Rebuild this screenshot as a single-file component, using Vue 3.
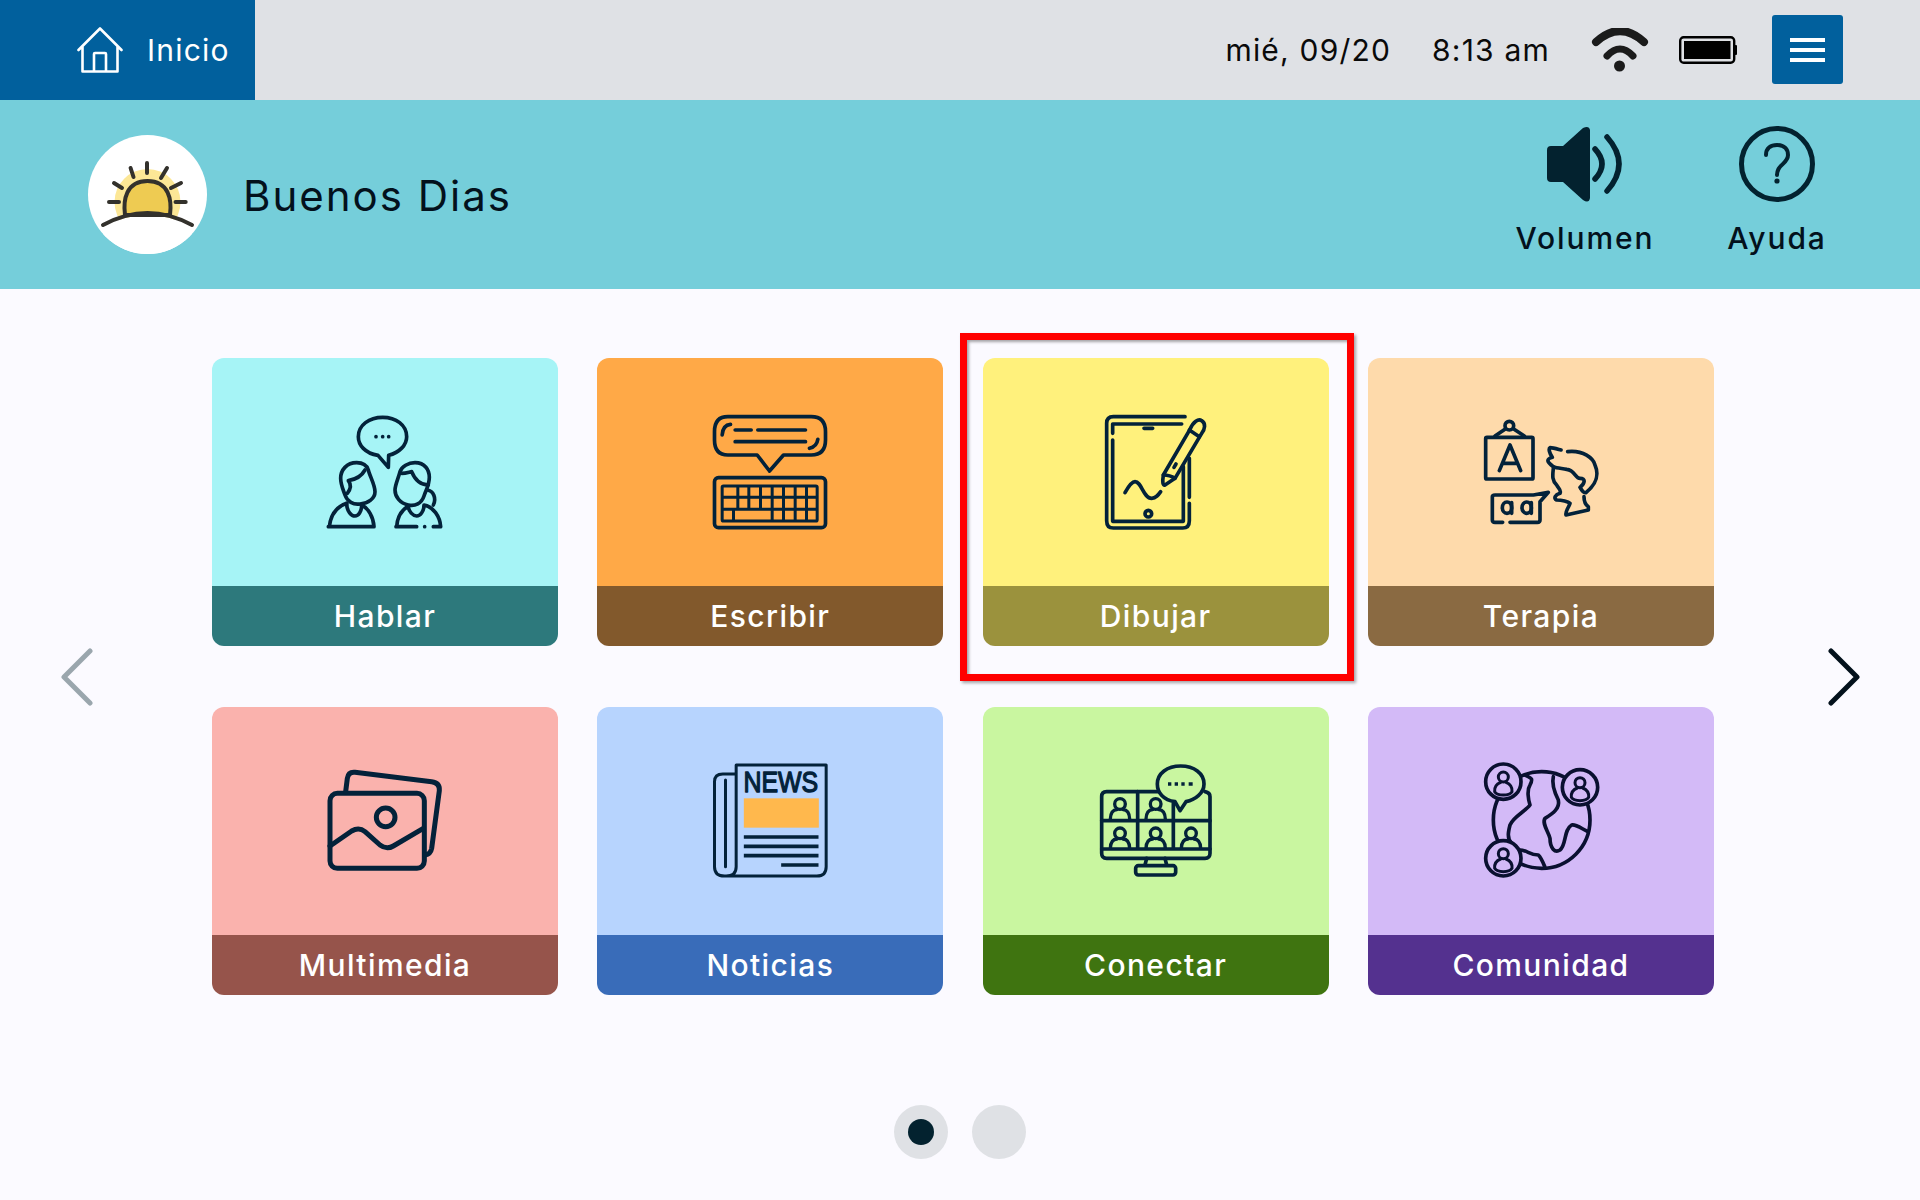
<script setup>
const cards = [
  { key: 'hablar', label: 'Hablar', top: '#a6f4f6', bar: '#2d797c', box: '75 66 360 360' },
  { key: 'escribir', label: 'Escribir', top: '#ffa947', bar: '#82592c', box: '61.5 66 360 360' },
  { key: 'dibujar', label: 'Dibujar', top: '#fff17c', bar: '#9b923d', box: '78 66 360 360', marked: true },
  { key: 'terapia', label: 'Terapia', top: '#fedaab', bar: '#8a6a42', box: '63 36 360 360' },
  { key: 'multimedia', label: 'Multimedia', top: '#fab2ad', bar: '#96544b', box: '45 33 360 360' },
  { key: 'noticias', label: 'Noticias', top: '#b7d4fe', bar: '#396cb9', box: '61.5 33 360 360' },
  { key: 'conectar', label: 'Conectar', top: '#c9f6a0', bar: '#3f7410', box: '48 33 360 360' },
  { key: 'comunidad', label: 'Comunidad', top: '#d3baf7', bar: '#54318f', box: '33 33 360 360' }
]
const keyV = [145, 178, 213, 248, 282, 317, 351]
const viewers = [[120, 162], [227, 162], [120, 250], [227, 250], [333, 250]]
const globePeople = [[100, 95], [330, 112], [100, 325]]
</script>

<template>
  <div class="page">
    <header class="topbar">
      <div class="home">
        <svg class="home-icon" viewBox="0 0 46 46" fill="none" stroke="#fff" stroke-width="2.6" stroke-linejoin="round" stroke-linecap="round">
          <path d="M1.5 23 L23 1.5 L44.5 23 M5.5 20 V44.5 H40.5 V20 M17 44.5 V27 Q17 26 18 26 H28 Q29 26 29 27 V44.5" />
        </svg>
        <span class="home-label">Inicio</span>
      </div>
      <div class="status">
        <span class="date">mié, 09/20</span>
        <span class="time">8:13 am</span>
        <svg class="wifi" viewBox="0 0 58 44" fill="none" stroke="#1b1b1b" stroke-linecap="round">
          <path d="M5 14 Q29 -8 53 14" stroke-width="8" />
          <path d="M16 28 Q29 14 42 28" stroke-width="7" />
          <circle cx="28.5" cy="38" r="5.5" fill="#1b1b1b" stroke="none" />
        </svg>
        <svg class="battery" viewBox="0 0 58 28">
          <rect x="1.2" y="1.2" width="54" height="25.6" rx="3.5" fill="none" stroke="#000" stroke-width="2.4" />
          <rect x="5" y="5" width="46.5" height="18" fill="#000" />
          <rect x="55.5" y="9" width="2.5" height="10" rx="1" fill="#000" />
        </svg>
        <button class="menu" type="button" aria-label="Menú">
          <i></i><i></i><i></i>
        </button>
      </div>
    </header>

    <section class="greeting">
      <div class="avatar">
        <svg viewBox="0 0 119 119" width="119" height="119" fill="none" stroke="#33312c" stroke-width="4" stroke-linecap="round">
          <circle cx="59.5" cy="67" r="33" fill="#fce796" stroke="none" />
          <path d="M15 92 Q59.5 68 104 92 L104 119 H15 Z" fill="#fff" stroke="none" />
          <path d="M37 80 C35 65 38 46 59.5 46 C81 46 84 65 82 80 Z" fill="#eecb52" />
          <path d="M59 28 V38 M42.6 33 L45.5 42 M79 33 L73 43 M26 48 L34 53 M93 48 L83 53 M21 67 H31 M87.5 67 H97.7" />
          <path d="M15 90 Q59.5 66 104 90" />
        </svg>
      </div>
      <h1 class="hello">Buenos Dias</h1>
      <div class="tools">
        <div class="tool volume">
          <svg width="77" height="76" viewBox="0 0 77 76" fill="none" stroke="#03222f" stroke-width="5.5" stroke-linecap="round">
            <path d="M0 24 Q0 20 4 20 H16 L36 2 Q42 -1 43 4 V72 Q42 78 36 74 L16 56 H4 Q0 56 0 52 Z" fill="#03222f" stroke="none" />
            <path d="M48 23 Q62 38 48 53 M60 11 Q84 38 60 65" />
          </svg>
          <span>Volumen</span>
        </div>
        <div class="tool help">
          <svg width="76" height="76" viewBox="0 0 76 76" fill="none" stroke="#03222f" stroke-linecap="round">
            <circle cx="38" cy="38" r="35.5" stroke-width="5" />
            <path d="M27 29 C27 22 32 19 38 19 C45 19 49 23 49 29 C49 36 42 38 39.5 43 C38.5 45 38 47 38 49" stroke-width="4" />
            <circle cx="38" cy="55" r="2.6" fill="#03222f" stroke="none" />
          </svg>
          <span>Ayuda</span>
        </div>
      </div>
    </section>

    <main class="carousel">
      <div class="side side-left">
        <svg width="32" height="58" viewBox="0 0 32 58" fill="none" stroke="#9aa6ad" stroke-width="5" stroke-linecap="round" stroke-linejoin="round">
          <path d="M29 3 L3 29 L29 55" />
        </svg>
      </div>
      <div class="grid">
        <article v-for="c in cards" :key="c.key" class="card">
          <div class="art" :style="{ background: c.top }">
            <svg class="glyph" :viewBox="c.box" fill="none" stroke="#03223a" stroke-width="11" stroke-linecap="round" stroke-linejoin="round">
              <template v-if="c.key === 'hablar'">
                <path d="M234 196 C195 190 175 165 175 140 C175 105 208 82 248 82 C288 82 320 105 320 140 C320 165 298 188 266 196 L265 232 Z" />
                <g fill="#03223a" stroke="none"><circle cx="228" cy="140" r="5.5" /><circle cx="248" cy="140" r="5.5" /><circle cx="266" cy="140" r="5.5" /></g>
                <path d="M170 218 C140 218 122 240 122 265 C122 285 130 300 135 315 C142 335 160 345 180 342 C205 340 225 325 225 305 C225 285 210 260 205 240 C200 225 185 218 170 218 Z" />
                <path d="M195 240 C185 258 170 268 145 272 C155 285 150 300 142 310" />
                <path d="M140 340 C140 365 155 378 165 378 C175 378 185 365 185 345" />
                <path d="M88 410 C92 375 110 350 140 340 M185 345 C205 355 220 380 222 410 M85 410 H222" />
                <path d="M345 218 C375 218 388 240 388 262 C388 285 378 300 372 318 C365 340 345 350 325 345 C300 340 285 320 285 300 C285 285 295 265 300 245 C305 230 325 218 345 218 Z" />
                <path d="M305 250 C320 250 330 245 335 245 C345 270 360 285 385 285" />
                <path d="M382 300 C400 302 410 325 400 345" />
                <path d="M290 410 C292 380 305 360 325 348 C325 365 340 378 350 378 C360 378 372 365 372 345 C400 350 420 380 422 410 M288 410 H350 M400 410 H422" />
                <circle cx="374" cy="410" r="5.5" fill="#03223a" stroke="none" />
              </template>
              <template v-else-if="c.key === 'escribir'">
                <path d="M115 80 H365 Q408 80 408 125 V150 Q408 195 365 195 H282 L240 243 L203 195 H115 Q75 195 75 150 V125 Q75 80 115 80 Z" />
                <path d="M123 103 Q100 105 98 135 M137 120 H185 M205 120 H348 M137 155 H348 M385 148 Q382 170 360 175" />
                <rect x="75" y="263" width="333" height="150" rx="12" />
                <rect x="98" y="288" width="285" height="105" rx="4" stroke-width="9" />
                <path stroke-width="9" stroke-linecap="butt" d="M98 322 H383 M98 358 H383" />
                <path v-for="x in keyV.slice(0, 3)" :key="x" stroke-width="9" stroke-linecap="butt" :d="`M${x} 288 V358`" />
                <path v-for="x in keyV.slice(3)" :key="x" stroke-width="9" stroke-linecap="butt" :d="`M${x} 288 V393`" />
                <path stroke-width="9" stroke-linecap="butt" d="M132 358 V393" />
              </template>
              <template v-else-if="c.key === 'dibujar'">
                <path d="M345 80 H130 Q110 80 110 100 V392 Q110 414 130 414 H338 Q358 414 358 392 V340 M358 322 V205" />
                <path d="M128 150 V394 H340 V230 M128 130 V102 H335" />
                <path d="M222 115 H248 M165 308 C175 290 185 275 195 275 C215 275 220 325 245 325 C258 325 265 315 272 305 M312 232 L318 222" />
                <circle cx="235" cy="371" r="10" />
                <path d="M280 255 L360 118 C370 95 385 85 395 92 C408 100 405 118 395 130 L315 265 L285 285 Q275 288 280 255 Z" />
                <path d="M280 255 Q300 255 315 265 M358 120 L388 140" />
              </template>
              <template v-else-if="c.key === 'terapia'">
                <rect x="77" y="112" width="142" height="125" rx="4" />
                <circle cx="148" cy="77" r="13" />
                <path d="M105 108 L137 86 M160 86 L193 108 M118 212 L150 135 L182 212 M128 190 H172" />
                <path d="M128 367 H105 Q97 367 97 360 V290 Q97 285 105 285 H220 L265 277 L240 305 V360 Q240 367 232 367 H150" />
                <ellipse cx="141" cy="323" rx="14" ry="17" />
                <ellipse cx="200" cy="323" rx="14" ry="17" />
                <path d="M155 308 V340 M214 308 V340" />
                <path d="M323 155 C370 150 400 175 405 195 C420 230 405 255 378 278 C370 280 365 270 360 262 C375 250 378 235 360 235 C345 235 345 210 320 208 C305 205 290 205 280 200 C260 185 258 178 277 172 C268 160 265 145 270 143 C280 143 295 148 303 150" />
                <path d="M280 205 C278 225 275 240 290 255 C295 265 305 270 300 280 C285 285 280 295 290 300 C305 300 325 305 330 310 C325 325 315 335 318 345 L385 330 L385 320 C378 315 372 305 372 290" />
              </template>
              <template v-else-if="c.key === 'multimedia'">
                <rect x="60" y="130" width="283" height="225" rx="22" stroke-width="15" />
                <path stroke-width="15" d="M107 125 L112 85 Q115 65 135 67 L365 95 Q390 98 388 122 L365 295 Q362 312 345 315" />
                <circle cx="227" cy="202" r="28" stroke-width="15" />
                <path stroke-width="15" d="M60 288 L125 243 Q147 230 165 245 L210 285 Q230 300 250 288 L340 235" />
              </template>
              <template v-else-if="c.key === 'noticias'">
                <rect x="163" y="145" width="225" height="88" fill="#ffb84d" stroke="none" />
                <path stroke-width="9" d="M140 45 H410 V350 Q410 378 382 378 H105 Q75 378 75 350 V95 Q75 72 100 72 H140 M140 45 V350 Q140 378 110 378 M108 90 V350" />
                <path stroke-width="11" stroke-linecap="butt" d="M163 261 H387 M163 289 H387 M163 317 H387 M275 345 H387" />
                <text class="news" transform="translate(162 126) scale(0.83 1)">NEWS</text>
              </template>
              <template v-else-if="c.key === 'conectar'">
                <path d="M235 125 H80 Q65 125 65 140 V310 Q65 325 80 325 H375 Q390 325 390 310 V140 Q390 128 375 125" />
                <path d="M65 297 H390 M65 212 H390 M173 125 V297 M280 160 V297" />
                <g v-for="(p, i) in viewers" :key="i">
                  <circle :cx="p[0]" :cy="p[1]" r="16" stroke-width="10" />
                  <path stroke-width="10" :d="`M${p[0] - 29} ${p[1] + 45} Q${p[0] - 28} ${p[1] + 18} ${p[0] - 9} ${p[1] + 17} M${p[0] + 9} ${p[1] + 17} Q${p[0] + 28} ${p[1] + 18} ${p[0] + 29} ${p[1] + 45}`" />
                </g>
                <path :fill="c.top" d="M285 155 C250 150 232 128 232 102 C232 70 262 48 302 48 C342 48 372 70 372 102 C372 130 345 150 318 155 L300 182 Z" />
                <path stroke-linecap="butt" d="M264 102 H274 M284 102 H294 M304 102 H314 M326 102 H338" />
                <path d="M200 325 L195 345 M255 325 L260 345" />
                <rect x="167" y="347" width="120" height="28" rx="8" />
              </template>
              <template v-else>
                <g stroke="#0a1030">
                  <circle cx="215" cy="210" r="145" />
                  <path d="M165 75 C185 85 190 85 180 105 C170 120 175 150 180 165 C165 185 130 200 120 225 C115 245 110 265 125 280" />
                  <path d="M150 300 C170 300 180 315 205 315 C215 325 220 340 225 352" />
                  <path d="M250 80 C245 100 255 130 265 150 C270 175 250 190 225 205 C215 220 235 245 240 265 C240 295 255 310 270 300 C290 285 280 240 305 225 C320 222 340 240 355 245" />
                  <g v-for="(p, i) in globePeople" :key="i">
                    <circle :cx="p[0]" :cy="p[1]" r="53" :fill="c.top" />
                    <circle :cx="p[0]" :cy="p[1] - 14" r="15" stroke-width="9" />
                    <path stroke-width="9" :d="`M${p[0] - 8} ${p[1] + 2} Q${p[0] - 28} ${p[1] + 10} ${p[0] - 26} ${p[1] + 30} Q${p[0] - 20} ${p[1] + 40} ${p[0]} ${p[1] + 40} Q${p[0] + 20} ${p[1] + 40} ${p[0] + 26} ${p[1] + 30} Q${p[0] + 28} ${p[1] + 10} ${p[0] + 8} ${p[1] + 2}`" />
                  </g>
                </g>
              </template>
            </svg>
          </div>
          <div class="bar" :style="{ background: c.bar }">{{ c.label }}</div>
          <span v-if="c.marked" class="marker"></span>
        </article>
      </div>
      <div class="side side-right">
        <svg width="32" height="58" viewBox="0 0 32 58" fill="none" stroke="#03111c" stroke-width="5" stroke-linecap="round" stroke-linejoin="round">
          <path d="M3 3 L29 29 L3 55" />
        </svg>
      </div>
    </main>

    <nav class="dots">
      <span class="dot"><b></b></span>
      <span class="dot"></span>
    </nav>
  </div>
</template>

<style scoped>
.page {
  width: 1920px;
  height: 1200px;
  overflow: hidden;
  background: #fbfaff;
  color: #03111c;
  font-family: Inter, "Liberation Sans", sans-serif;
}
.topbar {
  height: 100px;
  display: flex;
  justify-content: space-between;
  background: #dfe1e5;
}
.home {
  width: 255px;
  padding-left: 77px;
  box-sizing: border-box;
  display: flex;
  align-items: center;
  gap: 24px;
  background: #01609d;
  color: #fff;
}
.home-icon {
  width: 46px;
  height: 46px;
}
.home-label {
  font-size: 30px;
  letter-spacing: 1.2px;
}
.status {
  display: flex;
  align-items: center;
  padding-right: 77px;
  font-size: 30px;
  letter-spacing: 1.2px;
  color: #0a0a0a;
}
.date {
  margin-right: 41px;
}
.time {
  margin-right: 41px;
}
.wifi {
  width: 58px;
  height: 44px;
  margin-right: 30px;
}
.battery {
  width: 58px;
  height: 28px;
  margin-right: 35px;
}
.menu {
  width: 71px;
  height: 69px;
  margin-bottom: 1px;
  padding: 0;
  border: 0;
  border-radius: 3px;
  background: #01609d;
  display: flex;
  flex-direction: column;
  align-items: center;
  justify-content: center;
  gap: 6px;
}
.menu i {
  display: block;
  width: 35px;
  height: 4px;
  background: #fff;
}
.greeting {
  height: 189px;
  display: flex;
  align-items: center;
  padding: 0 94px 0 88px;
  background: #75ceda;
}
.avatar {
  width: 119px;
  height: 119px;
  border-radius: 50%;
  background: #fff;
  overflow: hidden;
  flex: none;
}
.avatar svg {
  display: block;
}
.hello {
  margin: 2px 0 0 36px;
  font-size: 42px;
  font-weight: 400;
  letter-spacing: 2px;
}
.tools {
  margin-left: auto;
  margin-bottom: 7px;
  display: flex;
  align-items: flex-start;
}
.tool {
  display: flex;
  flex-direction: column;
  align-items: center;
  font-size: 30px;
  font-weight: 500;
  line-height: 36px;
  letter-spacing: 1.9px;
}
.tool svg {
  margin-bottom: 18px;
}
.volume {
  width: 138px;
  margin-right: 74px;
}
.help {
  width: 98px;
}
.carousel {
  display: flex;
  align-items: center;
  padding-top: 69px;
}
.side {
  display: flex;
  justify-content: center;
  box-sizing: border-box;
}
.side svg {
  display: block;
}
.side-left {
  width: 212px;
  padding-right: 58px;
}
.side-right {
  width: 206px;
  padding-left: 54px;
}
.grid {
  display: grid;
  grid-template-columns: repeat(4, 346px);
  grid-auto-rows: 288px;
  gap: 61px 39.33px;
}
.card {
  position: relative;
  display: flex;
  flex-direction: column;
}
.art {
  flex: 1;
  display: flex;
  align-items: center;
  justify-content: center;
  border-radius: 12px 12px 0 0;
}
.glyph {
  width: 120px;
  height: 120px;
}
.news {
  font-family: "Liberation Sans", sans-serif;
  font-weight: 400;
  font-size: 90px;
  fill: #03223a;
  stroke: #03223a;
  stroke-width: 4px;
  stroke-linecap: butt;
}
.bar {
  height: 60px;
  display: flex;
  align-items: center;
  justify-content: center;
  border-radius: 0 0 12px 12px;
  color: #fff;
  font-size: 30px;
  font-weight: 500;
  letter-spacing: 1.4px;
}
.marker {
  position: absolute;
  top: -25px;
  left: -23px;
  right: -25px;
  bottom: -35px;
  border: 7px solid #ff0000;
  box-shadow: 2px 2px 3px rgba(0, 0, 0, 0.35), inset 2px 2px 3px rgba(0, 0, 0, 0.35);
  pointer-events: none;
}
.dots {
  display: flex;
  justify-content: center;
  gap: 24px;
  margin-top: 110px;
}
.dot {
  width: 54px;
  height: 54px;
  border-radius: 50%;
  background: #dfe1e5;
  display: flex;
  align-items: center;
  justify-content: center;
}
.dot b {
  display: block;
  width: 26px;
  height: 26px;
  border-radius: 50%;
  background: #03222f;
}
</style>
